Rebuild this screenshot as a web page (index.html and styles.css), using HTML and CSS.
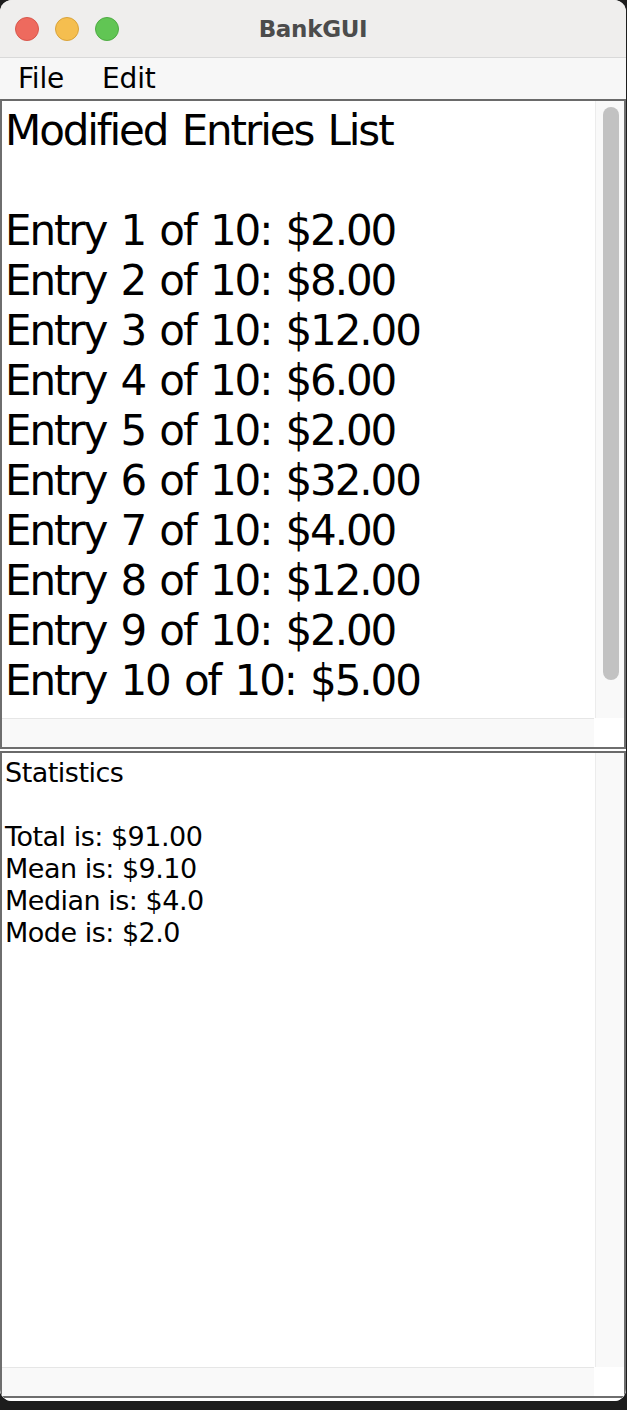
FILE: index.html
```html
<!DOCTYPE html>
<html>
<head>
<meta charset="utf-8">
<title>BankGUI</title>
<link rel="stylesheet" href="styles.css">
</head>
<body>
<div class="window">
  <div class="titlebar">
    <div class="lights">
      <span class="light red"></span>
      <span class="light yellow"></span>
      <span class="light green"></span>
    </div>
    <div class="title">BankGUI</div>
  </div>
  <div class="menubar">
    <span class="menu">File</span>
    <span class="menu">Edit</span>
  </div>
  <div class="panes">
    <div class="scrollpane top">
      <div class="viewport">
        <div class="text big">
          <div class="line">Modified Entries List</div>
          <div class="line blank"></div>
          <div class="line">Entry 1 of 10: $2.00</div>
          <div class="line">Entry 2 of 10: $8.00</div>
          <div class="line">Entry 3 of 10: $12.00</div>
          <div class="line">Entry 4 of 10: $6.00</div>
          <div class="line">Entry 5 of 10: $2.00</div>
          <div class="line">Entry 6 of 10: $32.00</div>
          <div class="line">Entry 7 of 10: $4.00</div>
          <div class="line">Entry 8 of 10: $12.00</div>
          <div class="line">Entry 9 of 10: $2.00</div>
          <div class="line">Entry 10 of 10: $5.00</div>
        </div>
        <div class="vtrack"><div class="thumb"></div></div>
      </div>
      <div class="hrow">
        <div class="htrack"></div>
        <div class="corner"></div>
      </div>
    </div>
    <div class="scrollpane bottom">
      <div class="viewport">
        <div class="text small">
          <div class="line">Statistics</div>
          <div class="line blank"></div>
          <div class="line">Total is: $91.00</div>
          <div class="line">Mean is: $9.10</div>
          <div class="line">Median is: $4.0</div>
          <div class="line">Mode is: $2.0</div>
        </div>
        <div class="vtrack"></div>
      </div>
      <div class="hrow">
        <div class="htrack"></div>
        <div class="corner"></div>
      </div>
    </div>
  </div>
</div>
</body>
</html>
```

FILE: styles.css
```css
html, body {
  margin: 0;
  padding: 0;
  background: #1d1d1d;
}
body {
  width: 627px;
  height: 1410px;
  overflow: hidden;
}
.window {
  width: 626px;
  height: 1401px;
  background: #f7f7f7;
  border-radius: 12px;
  overflow: hidden;
  display: flex;
  flex-direction: column;
  font-family: "DejaVu Sans", "Liberation Sans", sans-serif;
}
.titlebar {
  height: 57px;
  flex: none;
  background: #efeeed;
  border-bottom: 1px solid #d9d9d9;
  display: flex;
  align-items: center;
  position: relative;
}
.lights {
  display: flex;
  gap: 16px;
  padding-left: 15px;
}
.light {
  width: 24px;
  height: 24px;
  border-radius: 50%;
  box-sizing: border-box;
}
.red { background: #ee6a5e; border: 1px solid #d8574c; }
.yellow { background: #f5be4f; border: 1px solid #d9a33a; }
.green { background: #61c554; border: 1px solid #4eab43; }
.title {
  position: absolute;
  left: 0;
  right: 0;
  text-align: center;
  font-weight: bold;
  font-size: 23px;
  letter-spacing: -0.3px;
  color: #4c4c4c;
  pointer-events: none;
}
.menubar {
  height: 41px;
  flex: none;
  background: #f7f7f7;
  display: flex;
  align-items: center;
  gap: 38px;
  padding-left: 18px;
  font-size: 28px;
  letter-spacing: -0.2px;
  color: #000;
}
.panes {
  flex: 1;
  display: flex;
  flex-direction: column;
  gap: 2px;
  background: #ffffff;
}
.scrollpane {
  border: 2px solid #6e6e6e;
  border-top-color: #6a6a6a;
  display: flex;
  flex-direction: column;
  background: #fff;
}
.scrollpane.top { height: 646px; }
.scrollpane.bottom { height: 643px; }
.viewport {
  flex: 1;
  display: flex;
  min-height: 0;
}
.text {
  flex: 1;
  color: #000;
  padding-left: 3px;
  white-space: nowrap;
}
.text.big {
  font-size: 42px;
  line-height: 50px;
  letter-spacing: -2.1px;
  word-spacing: 3px;
  padding-top: 5px;
}
.text.small {
  font-size: 27px;
  line-height: 32px;
  letter-spacing: -0.5px;
  padding-top: 4px;
}
.line.blank { height: 1lh; }
.vtrack {
  width: 29px;
  flex: none;
  background: #f9f9f9;
  border-left: 1px solid #ececec;
  padding: 6px 0 0 7px;
  box-sizing: border-box;
}
.thumb {
  width: 16px;
  height: 573px;
  background: #c2c2c2;
  border-radius: 8px;
}
.hrow {
  height: 29px;
  flex: none;
  display: flex;
}
.htrack {
  flex: 1;
  background: #f9f9f9;
  border-top: 1px solid #e6e6e6;
}
.corner {
  width: 30px;
  background: #fff;
}
```
